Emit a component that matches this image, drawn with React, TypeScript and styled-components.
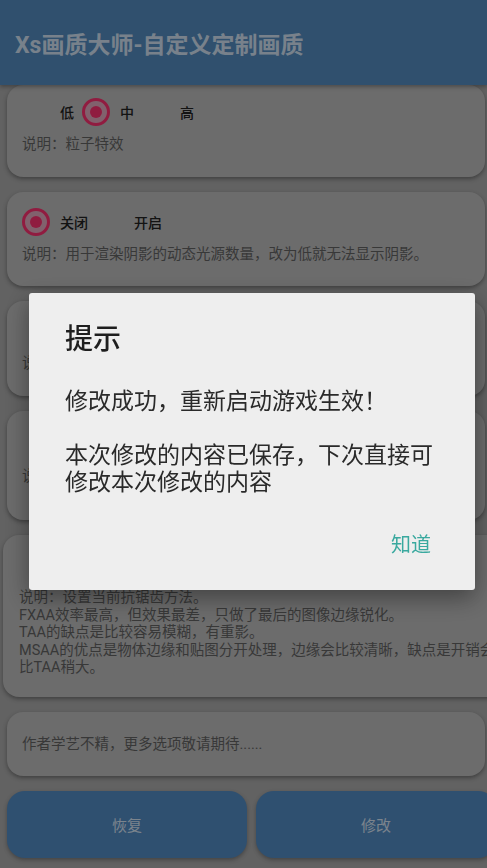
import React from 'react';
import styled, { createGlobalStyle } from 'styled-components';

const GlobalStyle = createGlobalStyle`
	html, body {
		margin: 0;
		padding: 0;
		overflow: hidden;
		background: #a3a3a3;
		font-family: Roboto, "Noto Sans CJK SC", sans-serif;
	}
`;

const Page = styled.div`
	width: 487px;
	height: 868px;
	overflow: hidden;
	background: #a3a3a3;
`;

const AppBar = styled.header`
	height: 85px;
	display: flex;
	align-items: center;
	padding-left: 15px;
	background: #5085b7;
	box-shadow: 0 2px 4px rgba(0, 0, 0, 0.3);
	position: relative;
	z-index: 1;
`;

const AppTitle = styled.h1`
	margin: 0;
	font-size: 23px;
	font-weight: 700;
	color: rgba(255, 255, 255, 0.7);
`;

const Content = styled.main`
	display: flex;
	flex-direction: column;
	align-items: flex-start;
	gap: 15px;
`;

const Card = styled.section<{ $top?: number; $bottom?: number; $wide?: boolean }>`
	flex-shrink: 0;
	box-sizing: border-box;
	margin-left: ${p => (p.$wide ? 3 : 7)}px;
	width: ${p => (p.$wide ? 514 : 478)}px;
	padding: ${p => p.$top ?? 16}px 15px ${p => p.$bottom ?? 23}px ${p => (p.$wide ? 16 : 15)}px;
	background: #b4b4b4;
	border-radius: 16px;
	box-shadow: 0 2px 4px rgba(0, 0, 0, 0.35);
`;

const OptionRow = styled.div`
	display: flex;
	align-items: center;
	height: 28px;
`;

const Option = styled.label`
	display: flex;
	align-items: center;
	gap: 10px;
	margin-right: 8px;
	font-size: 14px;
	font-weight: 500;
	color: #202020;
`;

const Radio = styled.span<{ $checked: boolean }>`
	box-sizing: border-box;
	width: 28px;
	height: 28px;
	border-radius: 50%;
	display: flex;
	align-items: center;
	justify-content: center;
	border: 3.5px solid ${p => (p.$checked ? '#f0306c' : 'transparent')};
	background: ${p => (p.$checked ? '#d8a2b6' : 'transparent')};

	&::after {
		content: '';
		width: 12px;
		height: 12px;
		border-radius: 50%;
		background: ${p => (p.$checked ? '#f0306c' : 'transparent')};
	}
`;

const Desc = styled.p`
	margin: 10px 0 0;
	font-size: 14.5px;
	line-height: 17.5px;
	color: #5e5e5e;
	white-space: pre-line;
`;

const Note = styled.p`
	margin: 0;
	font-size: 14.5px;
	line-height: 17.5px;
	color: #5e5e5e;
`;

const ButtonRow = styled.div`
	display: flex;
	gap: 9px;
	padding-left: 7px;
	margin-top: 0.5px;
`;

const ActionButton = styled.button`
	flex: 0 0 240px;
	height: 67px;
	border: none;
	border-radius: 18px;
	background: #4f85bb;
	color: rgba(255, 255, 255, 0.72);
	font-family: inherit;
	font-size: 15px;
	box-shadow: 0 2px 4px rgba(0, 0, 0, 0.3);
`;

const Scrim = styled.div`
	position: fixed;
	inset: 0;
	box-sizing: border-box;
	display: flex;
	align-items: flex-start;
	padding: 293px 0 0 29px;
	background: rgba(0, 0, 0, 0.4);
	z-index: 10;
`;

const Dialog = styled.div`
	box-sizing: border-box;
	width: 446px;
	padding: 29px 40px 27px 36px;
	background: #eeeeee;
	border-radius: 3px;
	box-shadow: 0 8px 24px rgba(0, 0, 0, 0.4);
`;

const DialogTitle = styled.h2`
	margin: 0;
	font-size: 28px;
	line-height: 36px;
	font-weight: 500;
	color: #1e1e1e;
`;

const DialogMessage = styled.p`
	margin: 30px 0 0;
	font-size: 23px;
	line-height: 27px;
	color: #2a2a2a;
	white-space: pre-line;
`;

const DialogActions = styled.div`
	display: flex;
	justify-content: flex-end;
	margin-top: 27px;
`;

const TextButton = styled.button`
	height: 40px;
	padding: 0 4px;
	border: none;
	background: none;
	font-family: inherit;
	font-size: 20px;
	color: #3aa99f;
`;

type Setting = {
	options: string[];
	selected: number;
	desc: string;
	top?: number;
	bottom?: number;
	wide?: boolean;
};

const settings: Setting[] = [
	{ options: ['低', '中', '高'], selected: 1, desc: '说明：粒子特效', top: 13 },
	{ options: ['关闭', '开启'], selected: 0, desc: '说明：用于渲染阴影的动态光源数量，改为低就无法显示阴影。' },
	{ options: ['低', '中', '高'], selected: 2, desc: '说明：阴影质量' },
	{ options: ['关闭', '开启'], selected: 1, desc: '说明：后期处理效果', top: 19, bottom: 35 },
	{
		options: ['关闭', 'FXAA', 'TAA', 'MSAA'],
		selected: 1,
		desc: '说明：设置当前抗锯齿方法。\nFXAA效率最高，但效果最差，只做了最后的图像边缘锐化。\nTAA的缺点是比较容易模糊，有重影。\nMSAA的优点是物体边缘和贴图分开处理，边缘会比较清晰，缺点是开销会比TAA稍大。',
		bottom: 20.5,
		wide: true,
	},
];

const App = () => {
	return (
		<>
			<GlobalStyle />
			<Page>
				<AppBar>
					<AppTitle>Xs画质大师-自定义定制画质</AppTitle>
				</AppBar>
				<Content>
					{settings.map((item, index) => (
						<Card key={index} $top={item.top} $bottom={item.bottom} $wide={item.wide}>
							<OptionRow>
								{item.options.map((name, i) => (
									<Option key={name}>
										<Radio $checked={i === item.selected} />
										{name}
									</Option>
								))}
							</OptionRow>
							<Desc>{item.desc}</Desc>
						</Card>
					))}
					<Card $top={24} $bottom={22}>
						<Note>作者学艺不精，更多选项敬请期待......</Note>
					</Card>
					<ButtonRow>
						<ActionButton>恢复</ActionButton>
						<ActionButton>修改</ActionButton>
					</ButtonRow>
				</Content>
			</Page>
			<Scrim>
				<Dialog>
					<DialogTitle>提示</DialogTitle>
					<DialogMessage>{'修改成功，重新启动游戏生效！\n\n本次修改的内容已保存，下次直接可修改本次修改的内容'}</DialogMessage>
					<DialogActions>
						<TextButton>知道</TextButton>
					</DialogActions>
				</Dialog>
			</Scrim>
		</>
	);
};

export default App;
